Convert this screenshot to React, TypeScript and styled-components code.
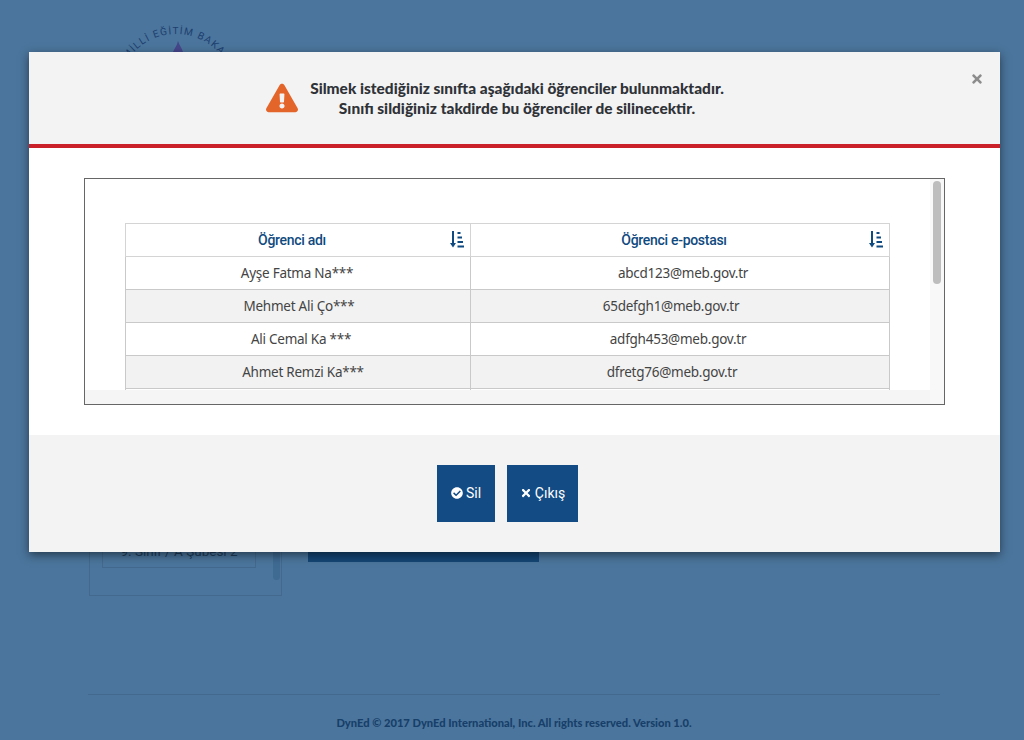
import styled, { createGlobalStyle } from 'styled-components'
import { FaCheckCircle, FaExclamationTriangle, FaTimes } from 'react-icons/fa'

const students = [
  { id: 1, name: 'Ayşe Fatma Na***', email: 'abcd123@meb.gov.tr', nameShift: -1, mailShift: 3 },
  { id: 2, name: 'Mehmet Ali Ço***', email: '65defgh1@meb.gov.tr', nameShift: 1, mailShift: -9 },
  { id: 3, name: 'Ali Cemal Ka ***', email: 'adfgh453@meb.gov.tr', nameShift: 3, mailShift: -2 },
  { id: 4, name: 'Ahmet Remzi Ka***', email: 'dfretg76@meb.gov.tr', nameShift: 5, mailShift: -8 },
  { id: 5, name: '', email: '', nameShift: 0, mailShift: 0 },
]

const GlobalStyle = createGlobalStyle`
  html, body {
    margin: 0;
    padding: 0;
    background: #4b759c;
  }
`

const Page = styled.div`
  position: relative;
  width: 1024px;
  height: 740px;
  overflow: hidden;
  background: #4b759c;
  font-family: 'Noto Sans', sans-serif;
`

const Shell = styled.div`
  width: 852px;
  margin-left: 88px;
`

const Brand = styled.div`
  height: 130px;
  padding-left: 30px;
  box-sizing: border-box;
  padding-top: 20px;
`

const Main = styled.div`
  display: flex;
  gap: 26px;
  height: 466px;
  padding-left: 1px;
`

const Sidebar = styled.div`
  position: relative;
  width: 193px;
  box-sizing: border-box;
  border: 1px solid #43698e;
  padding: 0 25px 27px 12px;
  display: flex;
  align-items: flex-end;
`

const ClassItem = styled.div`
  width: 100%;
  height: 32px;
  box-sizing: border-box;
  border: 1px solid #43698e;
  text-align: center;
  font-family: 'Roboto', sans-serif;
  font-size: 13.5px;
  line-height: 29px;
  color: #1f3f5e;
`

const SidebarThumb = styled.div`
  position: absolute;
  right: 1px;
  bottom: 15px;
  width: 7px;
  height: 60px;
  border-radius: 4px;
  background: #3f6a92;
`

const DarkButton = styled.div`
  align-self: flex-end;
  width: 231px;
  height: 60px;
  margin-bottom: 34px;
  background: #154675;
`

const Footer = styled.footer`
  margin-top: 98px;
  border-top: 1px solid #43698e;
  padding-top: 20px;
  text-align: center;
  font-family: 'Lato', sans-serif;
  font-size: 11.15px;
  font-weight: 900;
  line-height: 16px;
  color: #173f6a;
`

const Modal = styled.div`
  position: absolute;
  left: 29px;
  top: 52px;
  width: 971px;
  height: 500px;
  display: flex;
  flex-direction: column;
  background: #fff;
  box-shadow: 0 3px 9px rgba(0, 0, 0, 0.5);
`

const ModalHeader = styled.div`
  height: 92px;
  flex: none;
  padding-right: 39px;
  display: flex;
  align-items: center;
  justify-content: center;
  gap: 12px;
  background: #f3f3f3;
  border-bottom: 4px solid #c9202a;
`

const WarnIcon = styled(FaExclamationTriangle)`
  width: 32px;
  height: 32px;
  color: #e4652a;
`

const Message = styled.p`
  margin: 0;
  text-align: center;
  font-family: 'Lato', sans-serif;
  font-size: 15.45px;
  font-weight: 900;
  line-height: 20px;
  color: #2f3237;
`

const CloseButton = styled.button`
  position: absolute;
  top: 20px;
  right: 17px;
  padding: 0;
  border: none;
  background: transparent;
  color: #8c8c8c;
  display: flex;

  svg {
    width: 12px;
    height: 14px;
  }
`

const ModalBody = styled.div`
  flex: 1;
  min-height: 0;
  box-sizing: border-box;
  padding: 30px 55px;
`

const ScrollFrame = styled.div`
  position: relative;
  height: 100%;
  box-sizing: border-box;
  border: 1px solid #666;
  overflow: hidden;
`

const VerticalTrack = styled.div`
  position: absolute;
  top: 0;
  right: 0;
  bottom: 0;
  width: 14px;
  padding: 2px 3px 0;
  box-sizing: border-box;
  background: #f8f8f8;
`

const VerticalThumb = styled.div`
  height: 103px;
  border-radius: 4px;
  background: #bdbdbd;
`

const HorizontalTrack = styled.div`
  position: absolute;
  left: 0;
  right: 14px;
  bottom: 0;
  height: 14px;
  background: #f5f5f5;
`

const TableWrap = styled.div`
  padding: 44px 40px 0;
`

const Table = styled.table`
  width: 764px;
  table-layout: fixed;
  border-collapse: collapse;
`

const HeadCell = styled.th`
  position: relative;
  height: 33px;
  box-sizing: border-box;
  padding: 0 12px 0 0;
  border: 1px solid #d4d4d4;
  font-family: 'Roboto', sans-serif;
  font-size: 14px;
  font-weight: 500;
  letter-spacing: -0.3px;
  color: #0f4a80;
  background: #fff;
  width: ${(p) => p.$width}px;
`

const SortGlyph = styled.svg`
  position: absolute;
  right: 6px;
  top: 7px;
  width: 14px;
  height: 17px;
  fill: #0f4a80;
`

const Row = styled.tr`
  background: ${(p) => (p.$striped ? '#f2f2f2' : '#fff')};
`

const Cell = styled.td`
  height: 33px;
  box-sizing: border-box;
  padding: 0 ${(p) => Math.max(-p.$shift * 2, 0)}px 0 ${(p) => Math.max(p.$shift * 2, 0)}px;
  border: 1px solid #c9c9c9;
  text-align: center;
  font-size: 13.5px;
  letter-spacing: -0.25px;
  color: #444;
`

const ModalFooter = styled.div`
  height: 117px;
  flex: none;
  padding-right: 14px;
  box-sizing: border-box;
  display: flex;
  align-items: center;
  justify-content: center;
  gap: 12px;
  background: #f3f3f3;
`

const ActionButton = styled.button`
  height: 57px;
  width: ${(p) => p.$width}px;
  padding: 0 0 1px;
  border: none;
  display: flex;
  align-items: center;
  justify-content: center;
  gap: 3px;
  background: #134b84;
  color: #fff;
  font-family: 'Roboto', sans-serif;
  font-size: 14px;

  svg {
    width: 12px;
    height: 12px;
  }
`

const SortIcon = () => (
  <SortGlyph viewBox="0 0 14 17">
    <path d="M2 0h2v12h2l-3 4.5L0 12h2z" />
    <path d="M7.5 1h3v2h-3zM7.5 5.5h4.5v2H7.5zM7.5 10h5.5v2H7.5zM7.5 14.5H14v2H7.5z" />
  </SortGlyph>
)

const Logo = () => (
  <svg width="120" height="90" viewBox="0 0 120 90">
    <defs>
      <path id="logoArc" d="M 0 72 A 58 58 0 0 1 116 72" />
    </defs>
    <text fill="#1d3f70" fontFamily="Roboto, sans-serif" fontSize="10" letterSpacing="1.2">
      <textPath href="#logoArc" startOffset="57%" textAnchor="middle">
        MİLLİ EĞİTİM BAKANLIĞI
      </textPath>
    </text>
    <path d="M60 21c1 4 4 7 5 11H55c1-3 4-6 5-11z" fill="#46468c" />
  </svg>
)

const App = () => {
  return (
    <Page>
      <GlobalStyle />
      <Shell>
        <Brand>
          <Logo />
        </Brand>
        <Main>
          <Sidebar>
            <ClassItem>9. Sınıf / A Şubesi 2</ClassItem>
            <SidebarThumb />
          </Sidebar>
          <DarkButton />
        </Main>
        <Footer>DynEd © 2017 DynEd International, Inc. All rights reserved. Version 1.0.</Footer>
      </Shell>

      <Modal>
        <ModalHeader>
          <WarnIcon />
          <Message>
            Silmek istediğiniz sınıfta aşağıdaki öğrenciler bulunmaktadır.
            <br />
            Sınıfı sildiğiniz takdirde bu öğrenciler de silinecektir.
          </Message>
        </ModalHeader>
        <CloseButton>
          <FaTimes />
        </CloseButton>
        <ModalBody>
          <ScrollFrame>
            <TableWrap>
              <Table>
                <thead>
                  <tr>
                    <HeadCell $width={345}>
                      Öğrenci adı
                      <SortIcon />
                    </HeadCell>
                    <HeadCell $width={419}>
                      Öğrenci e-postası
                      <SortIcon />
                    </HeadCell>
                  </tr>
                </thead>
                <tbody>
                  {students.map((student, index) => (
                    <Row key={student.id} $striped={index % 2 === 1}>
                      <Cell $shift={student.nameShift}>{student.name}</Cell>
                      <Cell $shift={student.mailShift}>{student.email}</Cell>
                    </Row>
                  ))}
                </tbody>
              </Table>
            </TableWrap>
            <HorizontalTrack />
            <VerticalTrack>
              <VerticalThumb />
            </VerticalTrack>
          </ScrollFrame>
        </ModalBody>
        <ModalFooter>
          <ActionButton $width={58}>
            <FaCheckCircle />
            Sil
          </ActionButton>
          <ActionButton $width={71}>
            <FaTimes />
            Çıkış
          </ActionButton>
        </ModalFooter>
      </Modal>
    </Page>
  )
}

export default App
